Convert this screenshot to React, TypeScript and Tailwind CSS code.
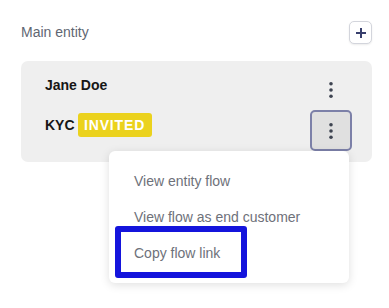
import React from "react";

function Dots() {
  return (
    <svg width="6" height="18" viewBox="0 0 6 18" className="text-[#3e4451]">
      <circle cx="3" cy="2.7" r="1.8" fill="currentColor" />
      <circle cx="3" cy="9" r="1.8" fill="currentColor" />
      <circle cx="3" cy="15.3" r="1.8" fill="currentColor" />
    </svg>
  );
}

export default function App() {
  return (
    <div
      className="min-h-screen bg-white"
      style={{ fontFamily: '"Liberation Sans", Arial, sans-serif' }}
    >
      <div className="ml-[21px] w-[351px] pt-[21px]">
        <div className="flex h-[23px] items-center justify-between">
          <span className="text-[14px] text-[#5f6673]">Main entity</span>
          <button className="flex h-[23px] w-[23px] items-center justify-center rounded-[5px] border border-[#d3d5dc] bg-white shadow-[0_1px_2px_rgba(0,0,0,0.08)]">
            <svg width="12" height="12" viewBox="0 0 12 12">
              <path d="M6 1v10M1 6h10" stroke="#383f6d" strokeWidth="2" />
            </svg>
          </button>
        </div>

        <div className="relative mt-[17px] flex justify-between rounded-[7px] bg-[#efefef] pb-[11px] pl-[24px] pr-[20px] pt-[9px]">
          <div className="flex flex-col pt-[5px]">
            <div className="h-[20px] text-[14px] font-bold leading-[20px] text-[#161616]">
              Jane Doe
            </div>
            <div className="mt-[18px] flex h-[24px] items-center gap-[3px]">
              <span className="text-[14px] font-bold text-[#161616]">KYC</span>
              <span className="flex h-[24px] w-[74px] items-center justify-center rounded-[3px] bg-[#ebd21d] text-[14px] font-bold tracking-[0.06em] text-white">
                INVITED
              </span>
            </div>
          </div>
          <div className="flex flex-col">
            <button className="flex h-[40px] w-[42px] items-center justify-center">
              <Dots />
            </button>
            <button className="flex h-[41px] w-[42px] items-center justify-center rounded-[5px] border-[2.5px] border-[#7c80a8] bg-[#e0e0e0]">
              <Dots />
            </button>
          </div>

          <div className="absolute left-[88px] top-[90px] w-[240px] rounded-[6px] bg-white py-[12px] shadow-[0_2px_10px_rgba(0,0,0,0.13)]">
            <div className="flex h-[36px] items-center px-[25px] text-[14px] text-[#6e717a]">
              View entity flow
            </div>
            <div className="flex h-[36px] items-center px-[25px] text-[14px] text-[#6e717a]">
              View flow as end customer
            </div>
            <div className="flex h-[36px] items-center px-[25px] text-[14px] text-[#6e717a]">
              Copy flow link
            </div>
            <div className="pointer-events-none absolute left-[6px] top-[75px] h-[52px] w-[132px] rounded-[3px] border-[6px] border-[#1414dc]" />
          </div>
        </div>
      </div>
    </div>
  );
}
